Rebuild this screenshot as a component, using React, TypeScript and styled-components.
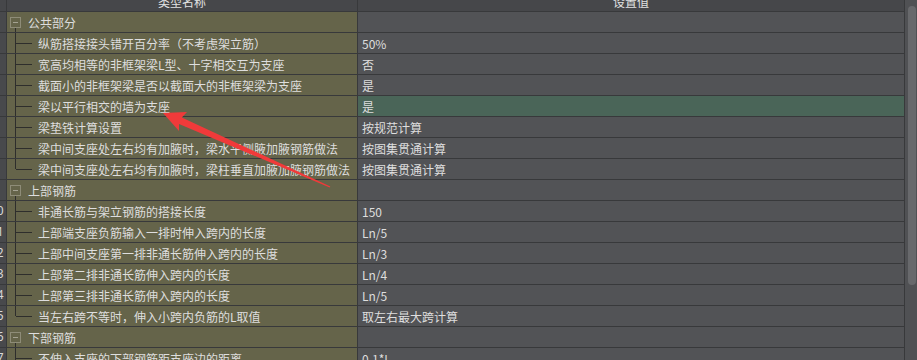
import React from "react";
import styled, { createGlobalStyle } from "styled-components";

const GlobalStyle = createGlobalStyle`
  html, body { margin: 0; padding: 0; background: #525356; overflow: hidden; }
  body { font-family: "Noto Sans CJK SC", "Noto Sans", sans-serif; font-size: 12px; color: #dedede; }
`;

const Frame = styled.div`
  position: relative;
  width: 917px;
  height: 360px;
  display: flex;
  overflow: hidden;
  background: #525356;
`;

const Grid = styled.div`
  width: 905px;
  display: flex;
  flex-direction: column;
`;

const COLS = "7px 351px 547px";

const HeaderRow = styled.div`
  display: grid;
  grid-template-columns: ${COLS};
  height: 20px;
  margin-top: -8px;
  box-sizing: border-box;
  border-bottom: 1px solid #38393b;
  background: #46474a;
`;

const HeaderCell = styled.div`
  box-sizing: border-box;
  border-right: 1px solid #38393b;
  display: flex;
  align-items: center;
  justify-content: center;
  line-height: 19px;
  color: #e2e2e2;
  overflow: hidden;
`;

const Row = styled.div`
  display: grid;
  grid-template-columns: ${COLS};
  height: 21px;
  box-sizing: border-box;
  border-bottom: 1px solid #38393b;
`;

const NumCell = styled.div`
  box-sizing: border-box;
  border-right: 1px solid #38393b;
  background: #48494c;
  overflow: hidden;
  white-space: nowrap;
  line-height: 20px;
  color: #d8d8d8;
  font-family: "Noto Sans", sans-serif;
`;

const NumText = styled.span`
  display: inline-block;
  margin-left: -10px;
`;

const NameCell = styled.div`
  box-sizing: border-box;
  border-right: 1px solid #38393b;
  background: #65644a;
  display: flex;
  align-items: center;
  overflow: hidden;
  white-space: nowrap;
`;

const ValueCell = styled.div<{ $selected?: boolean }>`
  box-sizing: border-box;
  border-right: 1px solid #38393b;
  background: ${(p) => (p.$selected ? "#4a6558" : "#525356")};
  display: flex;
  align-items: center;
  padding-left: 4px;
  white-space: nowrap;
  overflow: hidden;
`;

const GroupGutter = styled.div`
  position: relative;
  flex: none;
  width: 21px;
  align-self: stretch;
  &::after {
    content: "";
    position: absolute;
    left: 8px;
    top: 16px;
    bottom: 0;
    border-left: 1px solid #2e2e2c;
  }
`;

const ToggleBox = styled.span`
  position: absolute;
  left: 3px;
  top: 5px;
  width: 11px;
  height: 11px;
  box-sizing: border-box;
  border: 1px solid #8e8c78;
  display: flex;
  align-items: center;
  justify-content: center;
  &::before {
    content: "";
    width: 5px;
    border-top: 1px solid #a4a292;
  }
`;

const ChildGutter = styled.div<{ $last?: boolean }>`
  position: relative;
  flex: none;
  width: 31px;
  align-self: stretch;
  &::before {
    content: "";
    position: absolute;
    left: 8px;
    top: 0;
    height: ${(p) => (p.$last ? "10px" : "21px")};
    border-left: 1px solid #2e2e2c;
  }
  &::after {
    content: "";
    position: absolute;
    left: 9px;
    top: 10px;
    width: 16px;
    border-top: 1px solid #2e2e2c;
  }
`;

const Label = styled.span`
  color: #dedede;
`;

const ScrollTrack = styled.div`
  width: 12px;
  background: #505154;
  display: flex;
  justify-content: center;
  padding-top: 6px;
  box-sizing: border-box;
`;

const ScrollThumb = styled.div`
  width: 8px;
  height: 279px;
  margin-left: 2px;
  border-radius: 4px;
  background: #68696c;
`;

const ArrowLayer = styled.svg`
  position: absolute;
  left: 0;
  top: 0;
  pointer-events: none;
`;

type Item =
  | { kind: "group"; label: string }
  | { kind: "child"; label: string; value: string; last?: boolean; selected?: boolean };

const items: Item[] = [
  { kind: "group", label: "公共部分" },
  { kind: "child", label: "纵筋搭接接头错开百分率（不考虑架立筋）", value: "50%" },
  { kind: "child", label: "宽高均相等的非框架梁L型、十字相交互为支座", value: "否" },
  { kind: "child", label: "截面小的非框架梁是否以截面大的非框架梁为支座", value: "是" },
  { kind: "child", label: "梁以平行相交的墙为支座", value: "是", selected: true },
  { kind: "child", label: "梁垫铁计算设置", value: "按规范计算" },
  { kind: "child", label: "梁中间支座处左右均有加腋时，梁水平侧腋加腋钢筋做法", value: "按图集贯通计算" },
  { kind: "child", label: "梁中间支座处左右均有加腋时，梁柱垂直加腋加腋钢筋做法", value: "按图集贯通计算", last: true },
  { kind: "group", label: "上部钢筋" },
  { kind: "child", label: "非通长筋与架立钢筋的搭接长度", value: "150" },
  { kind: "child", label: "上部端支座负筋输入一排时伸入跨内的长度", value: "Ln/5" },
  { kind: "child", label: "上部中间支座第一排非通长筋伸入跨内的长度", value: "Ln/3" },
  { kind: "child", label: "上部第二排非通长筋伸入跨内的长度", value: "Ln/4" },
  { kind: "child", label: "上部第三排非通长筋伸入跨内的长度", value: "Ln/5" },
  { kind: "child", label: "当左右跨不等时，伸入小跨内负筋的L取值", value: "取左右最大跨计算", last: true },
  { kind: "group", label: "下部钢筋" },
  { kind: "child", label: "不伸入支座的下部钢筋距支座边的距离", value: "0.1*L" },
  { kind: "child", label: "下部钢筋不伸入支座时的锚固长度", value: "12*d" },
];

export default function App() {
  return (
    <>
      <GlobalStyle />
      <Frame>
        <Grid>
          <HeaderRow>
            <HeaderCell />
            <HeaderCell>类型名称</HeaderCell>
            <HeaderCell>设置值</HeaderCell>
          </HeaderRow>
          {items.map((it, i) => (
            <Row key={i}>
              <NumCell>
                <NumText>{i + 1}</NumText>
              </NumCell>
              <NameCell>
                {it.kind === "group" ? (
                  <>
                    <GroupGutter>
                      <ToggleBox />
                    </GroupGutter>
                    <Label>{it.label}</Label>
                  </>
                ) : (
                  <>
                    <ChildGutter $last={it.last} />
                    <Label>{it.label}</Label>
                  </>
                )}
              </NameCell>
              <ValueCell $selected={it.kind === "child" && it.selected}>
                {it.kind === "child" ? it.value : ""}
              </ValueCell>
            </Row>
          ))}
        </Grid>
        <ScrollTrack>
          <ScrollThumb />
        </ScrollTrack>
        <ArrowLayer width="917" height="360" viewBox="0 0 917 360">
          <polygon
            points="163,113 187,112 181.8,117.5 330.3,186.4 329.7,187.6 179,123.9 179,131"
            fill="#f03a3a"
          />
        </ArrowLayer>
      </Frame>
    </>
  );
}
